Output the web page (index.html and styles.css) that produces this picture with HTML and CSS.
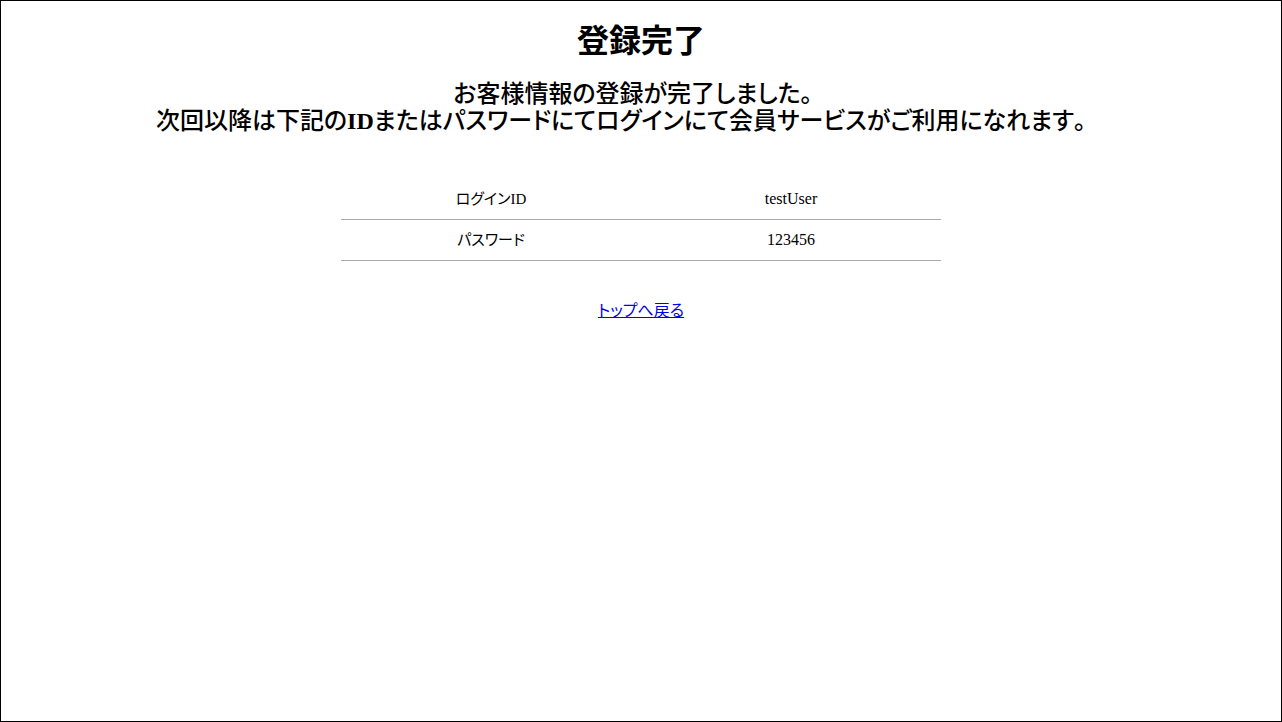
FILE: index.html
```html
<!DOCTYPE html>
<html lang="ja">
<head>
<meta charset="utf-8">
<title>登録完了</title>
<link rel="stylesheet" href="styles.css">
</head>
<body>
<div class="page">
  <h1 class="title">登録完了</h1>
  <h2 class="message">
    <span class="line line-1">お客様情報の登録が完了しました<span class="full">。</span></span>
    <span class="line line-2">次回以降は下記の<span class="latin">ID</span>またはパスワードにてログインにて会員サービスがご利用になれます<span class="full">。</span></span>
  </h2>
  <table class="info">
    <tr><td class="label">ログイン<span class="latin">ID</span></td><td class="value">testUser</td></tr>
    <tr><td class="label">パスワード</td><td class="value">123456</td></tr>
  </table>
  <a class="back" href="#">トップへ戻る</a>
</div>
</body>
</html>
```
FILE: styles.css
```css
html, body {
  margin: 0;
  padding: 0;
  background: #fff;
}
body {
  font-family: "Liberation Serif", "Noto Sans CJK JP", serif;
  color: #000;
}
.page {
  box-sizing: border-box;
  width: 1282px;
  height: 722px;
  border: 1px solid #000;
  padding-top: 14px;
  display: flex;
  flex-direction: column;
  align-items: center;
}
.title {
  margin: 0;
  font-size: 32px;
  line-height: 46px;
  font-weight: bold;
  font-family: "Noto Sans CJK JP", sans-serif;
  text-align: center;
}
.message {
  margin: 17px 0 0;
  font-size: 24px;
  line-height: 27px;
  font-weight: 500;
  text-align: center;
  font-family: "Noto Sans CJK JP", sans-serif;
  font-feature-settings: "palt";
}
.line {
  display: block;
}
.line-1 {
  padding-right: 4px;
}
.line-2 {
  padding-right: 28px;
}
.full {
  font-feature-settings: normal;
}
.message .latin {
  font-weight: bold;
}
.latin {
  font-family: "Liberation Serif", serif;
}
.info {
  margin-top: 44px;
  width: 600px;
  border-collapse: collapse;
  font-size: 16px;
}
.info td {
  width: 50%;
  height: 40px;
  padding: 0;
  text-align: center;
  border-bottom: 1px solid #aaa;
}
.info .label {
  height: 37px;
  font-family: "Noto Sans CJK JP", sans-serif;
  font-size: 15px;
  font-feature-settings: "palt";
  padding-bottom: 3px;
}
.value {
  font-family: "Liberation Serif", serif;
}
.back {
  margin-top: 38px;
  font-size: 16px;
  line-height: 20px;
  color: #0000ee;
  text-decoration: underline;
  font-family: "Noto Sans CJK JP", sans-serif;
  font-feature-settings: "palt";
}
```
